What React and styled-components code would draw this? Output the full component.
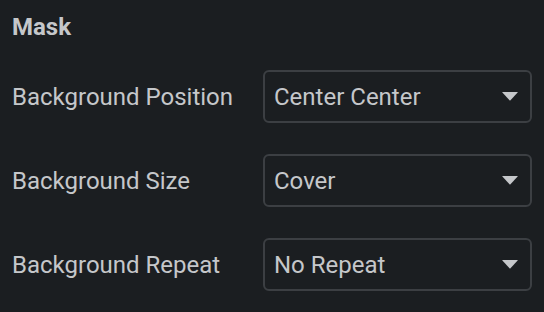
import React from "react";
import styled, { createGlobalStyle } from "styled-components";

const GlobalStyle = createGlobalStyle`
  html, body {
    margin: 0;
    padding: 0;
    background: #1b1e21;
  }
  body {
    font-family: Roboto, "Liberation Sans", sans-serif;
  }
`;

const rows = [
  { label: "Background Position", value: "Center Center" },
  { label: "Background Size", value: "Cover" },
  { label: "Background Repeat", value: "No Repeat" },
];

const Panel = styled.div`
  width: 544px;
  height: 312px;
  box-sizing: border-box;
  padding: 10px 12px 0 12px;
  background: #1b1e21;
  display: flex;
  flex-direction: column;
`;

const Title = styled.div`
  font-size: 24px;
  font-weight: 700;
  color: #c5c7ca;
  line-height: 34px;
  margin-bottom: 26px;
`;

const Row = styled.div`
  display: flex;
  align-items: center;
  justify-content: space-between;
  height: 53px;
  margin-bottom: 31px;
`;

const Label = styled.div`
  font-size: 24px;
  color: #c5c7ca;
`;

const Select = styled.div`
  width: 269px;
  height: 53px;
  box-sizing: border-box;
  border: 2px solid #3c3f43;
  border-radius: 6px;
  display: flex;
  align-items: center;
  justify-content: space-between;
  padding: 0 12px 0 9px;
  font-size: 24px;
  color: #c5c7ca;
`;

const Caret = () => (
  <svg width="16" height="9" viewBox="0 0 16 9">
    <path d="M0.5 0 L15.5 0 Q16 0 15.6 0.5 L8.5 8.3 Q8 8.8 7.5 8.3 L0.4 0.5 Q0 0 0.5 0 Z" fill="#c5c7ca" />
  </svg>
);

export default function App() {
  return (
    <>
      <GlobalStyle />
      <Panel>
        <Title>Mask</Title>
        {rows.map((r) => (
          <Row key={r.label}>
            <Label>{r.label}</Label>
            <Select>
              <span>{r.value}</span>
              <Caret />
            </Select>
          </Row>
        ))}
      </Panel>
    </>
  );
}
